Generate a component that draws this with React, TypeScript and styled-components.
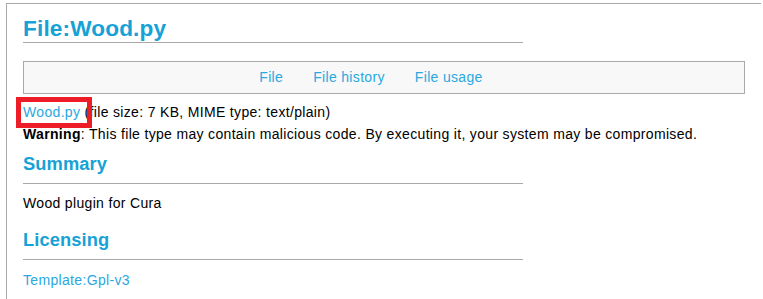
import styled, { createGlobalStyle } from 'styled-components'

const GlobalStyle = createGlobalStyle`
  html, body {
    margin: 0;
    padding: 0;
    background: #fff;
  }
  body {
    font-family: 'Liberation Sans', Arial, sans-serif;
    font-size: 14px;
    letter-spacing: 0.33px;
    color: #000;
  }
`

const navItems = ['File', 'File history', 'File usage']

const App = () => {
  return (
    <>
      <GlobalStyle />
      <Page>
        <Frame>
          <Title>File:Wood.py</Title>
          <FileNav>
            {navItems.map((item) => (
              <NavLink key={item} href='#'>
                {item}
              </NavLink>
            ))}
          </FileNav>
          <FileInfo>
            <Highlighted>
              <Link href='#'>Wood.py</Link>
            </Highlighted>{' '}
            (file size: 7 KB, MIME type: text/plain)
            <br />
            <b>Warning</b>: This file type may contain malicious code. By executing it, your system may be
            compromised.
          </FileInfo>
          <SectionTitle $top={8}>Summary</SectionTitle>
          <Paragraph $top={8}>Wood plugin for Cura</Paragraph>
          <SectionTitle $top={15}>Licensing</SectionTitle>
          <Paragraph $top={9}>
            <Link href='#'>Template:Gpl-v3</Link>
          </Paragraph>
        </Frame>
      </Page>
    </>
  )
}

export default App

const Page = styled.div`
  padding: 3px 2px 0 6px;
  height: 296px;
  overflow: hidden;
`

const Frame = styled.div`
  border-top: 1px solid #a9a9a9;
  border-left: 1px solid #a9a9a9;
  padding: 0 16px 20px 16px;
`

const Title = styled.h1`
  margin: 12px 0 0;
  width: 500px;
  font-size: 22.6px;
  line-height: 26px;
  font-weight: bold;
  letter-spacing: 0.15px;
  color: #16a2d6;
  border-bottom: 1px solid #a9a9a9;
`

const FileNav = styled.div`
  margin-top: 18px;
  height: 31px;
  border: 1px solid #a9a9a9;
  background: #f8f8f8;
  display: flex;
  justify-content: center;
  align-items: center;
  gap: 30px;
  padding-right: 26px;
  line-height: 31px;
`

const NavLink = styled.a`
  color: #2aa8df;
  text-decoration: none;
`

const Link = styled.a`
  color: #2aa8df;
  text-decoration: none;
`

const FileInfo = styled.div`
  margin-top: 7px;
  line-height: 22px;
`

const Highlighted = styled.span`
  position: relative;

  &::after {
    content: '';
    position: absolute;
    left: -7px;
    top: -7px;
    right: -12px;
    bottom: -8px;
    border: 5px solid #ec1d26;
    pointer-events: none;
  }
`

const SectionTitle = styled.h2<{ $top: number }>`
  margin: ${(p) => p.$top}px 0 0;
  width: 500px;
  padding-bottom: 8px;
  font-size: 18.3px;
  line-height: 22px;
  font-weight: bold;
  letter-spacing: 0.1px;
  color: #16a2d6;
  border-bottom: 1px solid #a9a9a9;
`

const Paragraph = styled.p<{ $top: number }>`
  margin: ${(p) => p.$top}px 0 0;
  line-height: 22px;
`
